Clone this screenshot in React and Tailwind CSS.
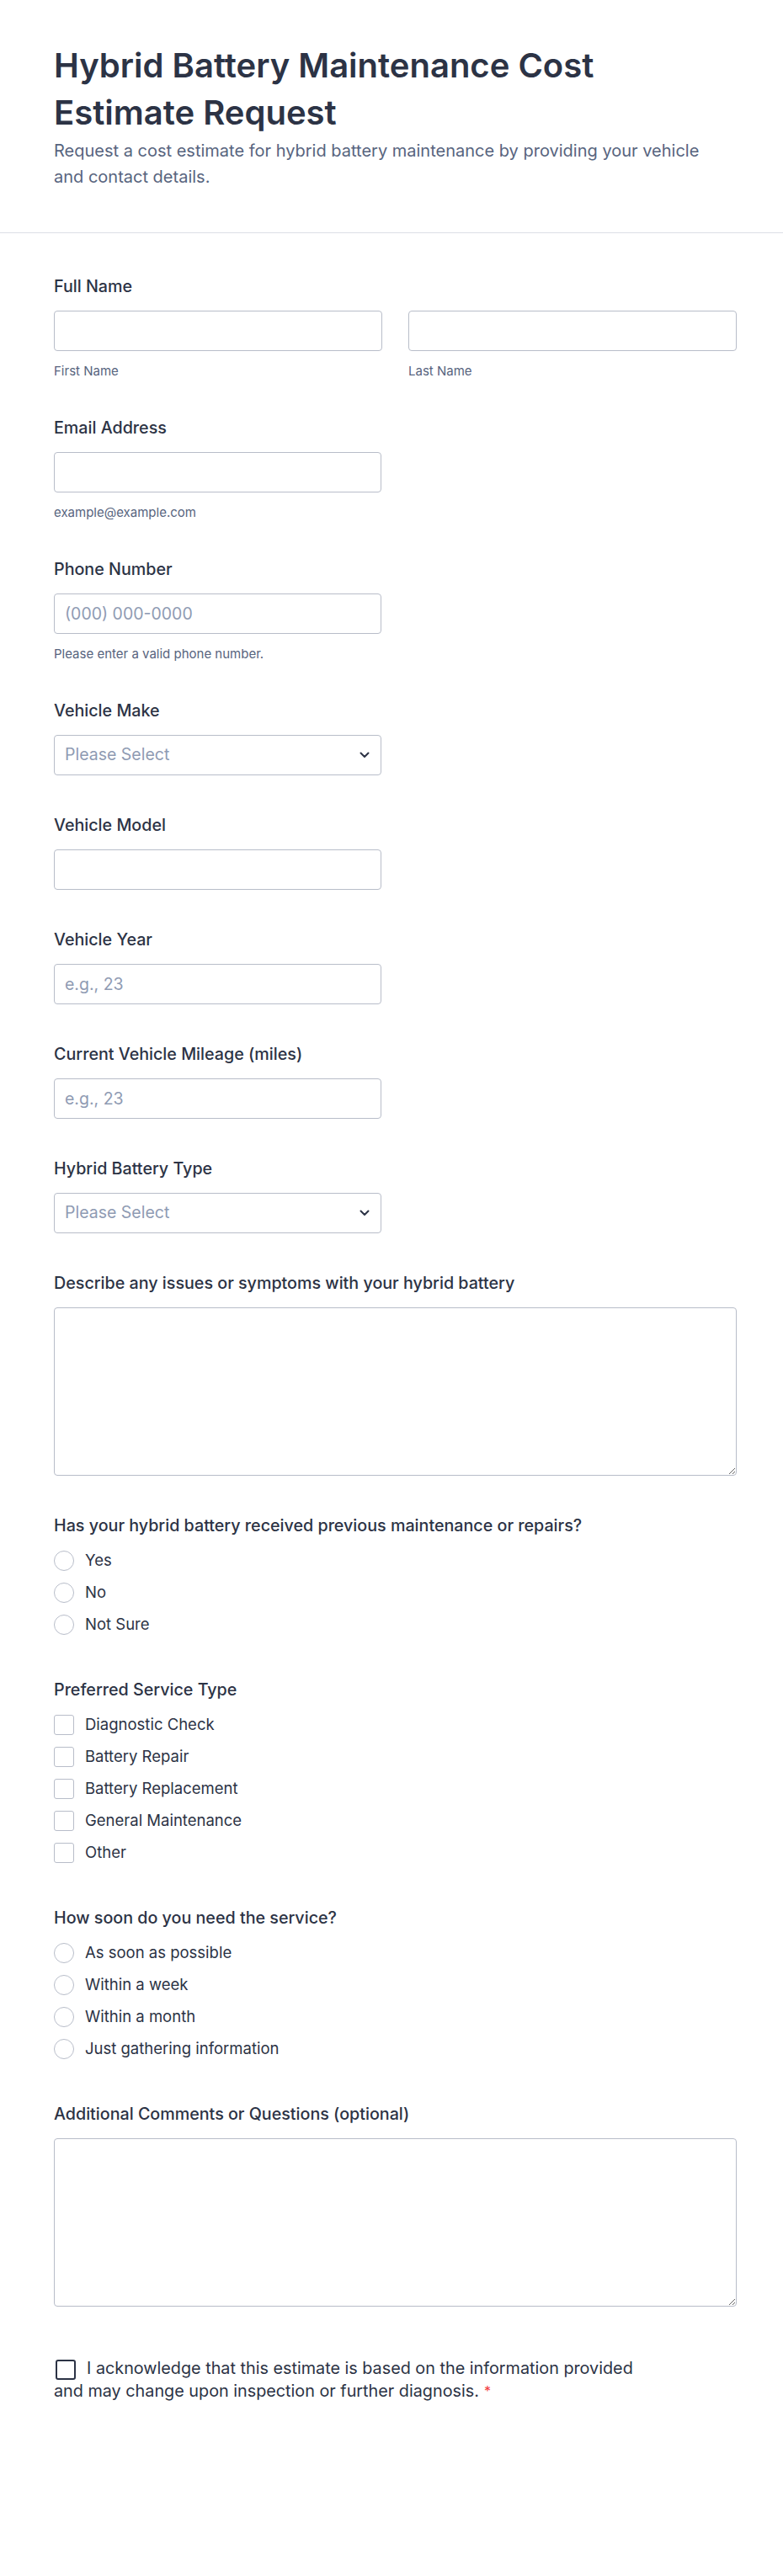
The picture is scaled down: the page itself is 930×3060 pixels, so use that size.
import { useState } from "react";

const labelCls = "block text-[19.7px] leading-6 font-medium text-[#2c3345]";
const inputCls =
  "block h-12 w-full rounded-[4px] border border-[#b8bdc9] bg-white px-3 text-[19.5px] text-[#2c3345] placeholder:text-[#8f9bb3] outline-none focus:border-[#2e69ff]";
const subCls = "mt-[14px] block text-[15px] leading-5 text-[#57647e]";

function Chevron() {
  return (
    <svg
      className="pointer-events-none absolute right-[14px] top-1/2 -translate-y-1/2"
      width="12"
      height="8"
      viewBox="0 0 12 8"
      fill="none"
    >
      <polyline points="1.5,1.5 6,6 10.5,1.5" stroke="#2c3345" strokeWidth="2" strokeLinecap="round" strokeLinejoin="round" />
    </svg>
  );
}

function SelectField({ label, options }) {
  const [value, setValue] = useState("");
  return (
    <div className="mb-[47px]">
      <label className={labelCls}>{label}</label>
      <div className="relative mt-[17px] w-[389px]">
        <select
          value={value}
          onChange={(e) => setValue(e.target.value)}
          className={`block h-12 w-full appearance-none rounded-[4px] border border-[#b8bdc9] bg-white px-3 text-[19.5px] outline-none ${
            value ? "text-[#2c3345]" : "text-[#8f9bb3]"
          }`}
        >
          <option value="">Please Select</option>
          {options.map((o) => (
            <option key={o} value={o}>
              {o}
            </option>
          ))}
        </select>
        <Chevron />
      </div>
    </div>
  );
}

function TextField({ label, placeholder, sub, type = "text" }) {
  return (
    <div className={sub ? "mb-[45px]" : "mb-[47px]"}>
      <label className={labelCls}>{label}</label>
      <div className="mt-[17px] w-[389px]">
        <input type={type} placeholder={placeholder} className={inputCls} />
      </div>
      {sub && <span className={subCls}>{sub}</span>}
    </div>
  );
}

function TextArea({ label, last }) {
  return (
    <div className={last ? "mb-[60px]" : "mb-[47px]"}>
      <label className={labelCls}>{label}</label>
      <textarea className="mt-[17px] block h-[200px] w-full rounded-[4px] border border-[#b8bdc9] bg-white px-3 py-2 text-[19.5px] text-[#2c3345] outline-none" />
    </div>
  );
}

function OptionGroup({ label, name, options, type }) {
  return (
    <div className="mb-[51px]">
      <div className={labelCls}>{label}</div>
      <div className="mt-4 flex flex-col gap-[10px]">
        {options.map((o) => (
          <label key={o} className="flex h-7 items-center gap-[13px] text-[18.5px] text-[#2c3345]">
            <input
              type={type}
              name={name}
              className={
                type === "radio"
                  ? "h-6 w-6 appearance-none rounded-full border border-[#b8bdc9] bg-white checked:border-[7px] checked:border-[#2e69ff]"
                  : "h-6 w-6 appearance-none rounded-[3px] border border-[#b8bdc9] bg-white checked:bg-[#2e69ff]"
              }
            />
            {o}
          </label>
        ))}
      </div>
    </div>
  );
}

export default function App() {
  return (
    <div className="min-h-[3060px] bg-white font-['Inter',sans-serif]">
      {/* header */}
      <div className="border-b border-[#dcdfe6] pb-[50px] pl-[64px] pt-[50px]">
        <div className="w-[780px]">
          <h1 className="text-[40px] font-semibold leading-[56px] text-[#2c3345]">
            Hybrid Battery Maintenance Cost Estimate Request
          </h1>
          <p className="mt-[2px] text-[20px] leading-[31px] text-[#57647e]">
            Request a cost estimate for hybrid battery maintenance by providing your vehicle and contact details.
          </p>
        </div>
      </div>

      {/* form */}
      <form className="pl-[64px] pr-[55px] pt-[51px]">
        <div className="mb-[45px]">
          <label className={labelCls}>Full Name</label>
          <div className="mt-[17px] flex gap-[31px]">
            <div className="flex-1">
              <input type="text" className={inputCls} />
              <span className={subCls}>First Name</span>
            </div>
            <div className="flex-1">
              <input type="text" className={inputCls} />
              <span className={subCls}>Last Name</span>
            </div>
          </div>
        </div>

        <TextField label="Email Address" type="email" sub="example@example.com" />
        <TextField label="Phone Number" type="tel" placeholder="(000) 000-0000" sub="Please enter a valid phone number." />
        <SelectField label="Vehicle Make" options={["Toyota", "Honda", "Ford", "Hyundai", "Kia", "Lexus", "Other"]} />
        <TextField label="Vehicle Model" />
        <TextField label="Vehicle Year" placeholder="e.g., 23" />
        <TextField label="Current Vehicle Mileage (miles)" placeholder="e.g., 23" />
        <SelectField label="Hybrid Battery Type" options={["Nickel-Metal Hydride (NiMH)", "Lithium-Ion (Li-ion)", "Not Sure"]} />
        <TextArea label="Describe any issues or symptoms with your hybrid battery" />

        <OptionGroup
          label="Has your hybrid battery received previous maintenance or repairs?"
          name="previous"
          type="radio"
          options={["Yes", "No", "Not Sure"]}
        />
        <OptionGroup
          label="Preferred Service Type"
          name="service"
          type="checkbox"
          options={["Diagnostic Check", "Battery Repair", "Battery Replacement", "General Maintenance", "Other"]}
        />
        <OptionGroup
          label="How soon do you need the service?"
          name="timing"
          type="radio"
          options={["As soon as possible", "Within a week", "Within a month", "Just gathering information"]}
        />
        <TextArea label="Additional Comments or Questions (optional)" last />

        <p className="w-[705px] text-[19.8px] leading-[27px] text-[#2c3345]">
          <input
            type="checkbox"
            className="ml-0.5 mr-[13px] inline-block h-6 w-6 appearance-none rounded-[3px] border-2 border-[#2c3345] bg-white align-middle checked:bg-[#2c3345]"
          />
          I acknowledge that this estimate is based on the information provided and may change upon inspection or
          further diagnosis.
          <span className="ml-1.5 align-top text-[16px] text-[#f23a3c]">*</span>
        </p>
      </form>
    </div>
  );
}
